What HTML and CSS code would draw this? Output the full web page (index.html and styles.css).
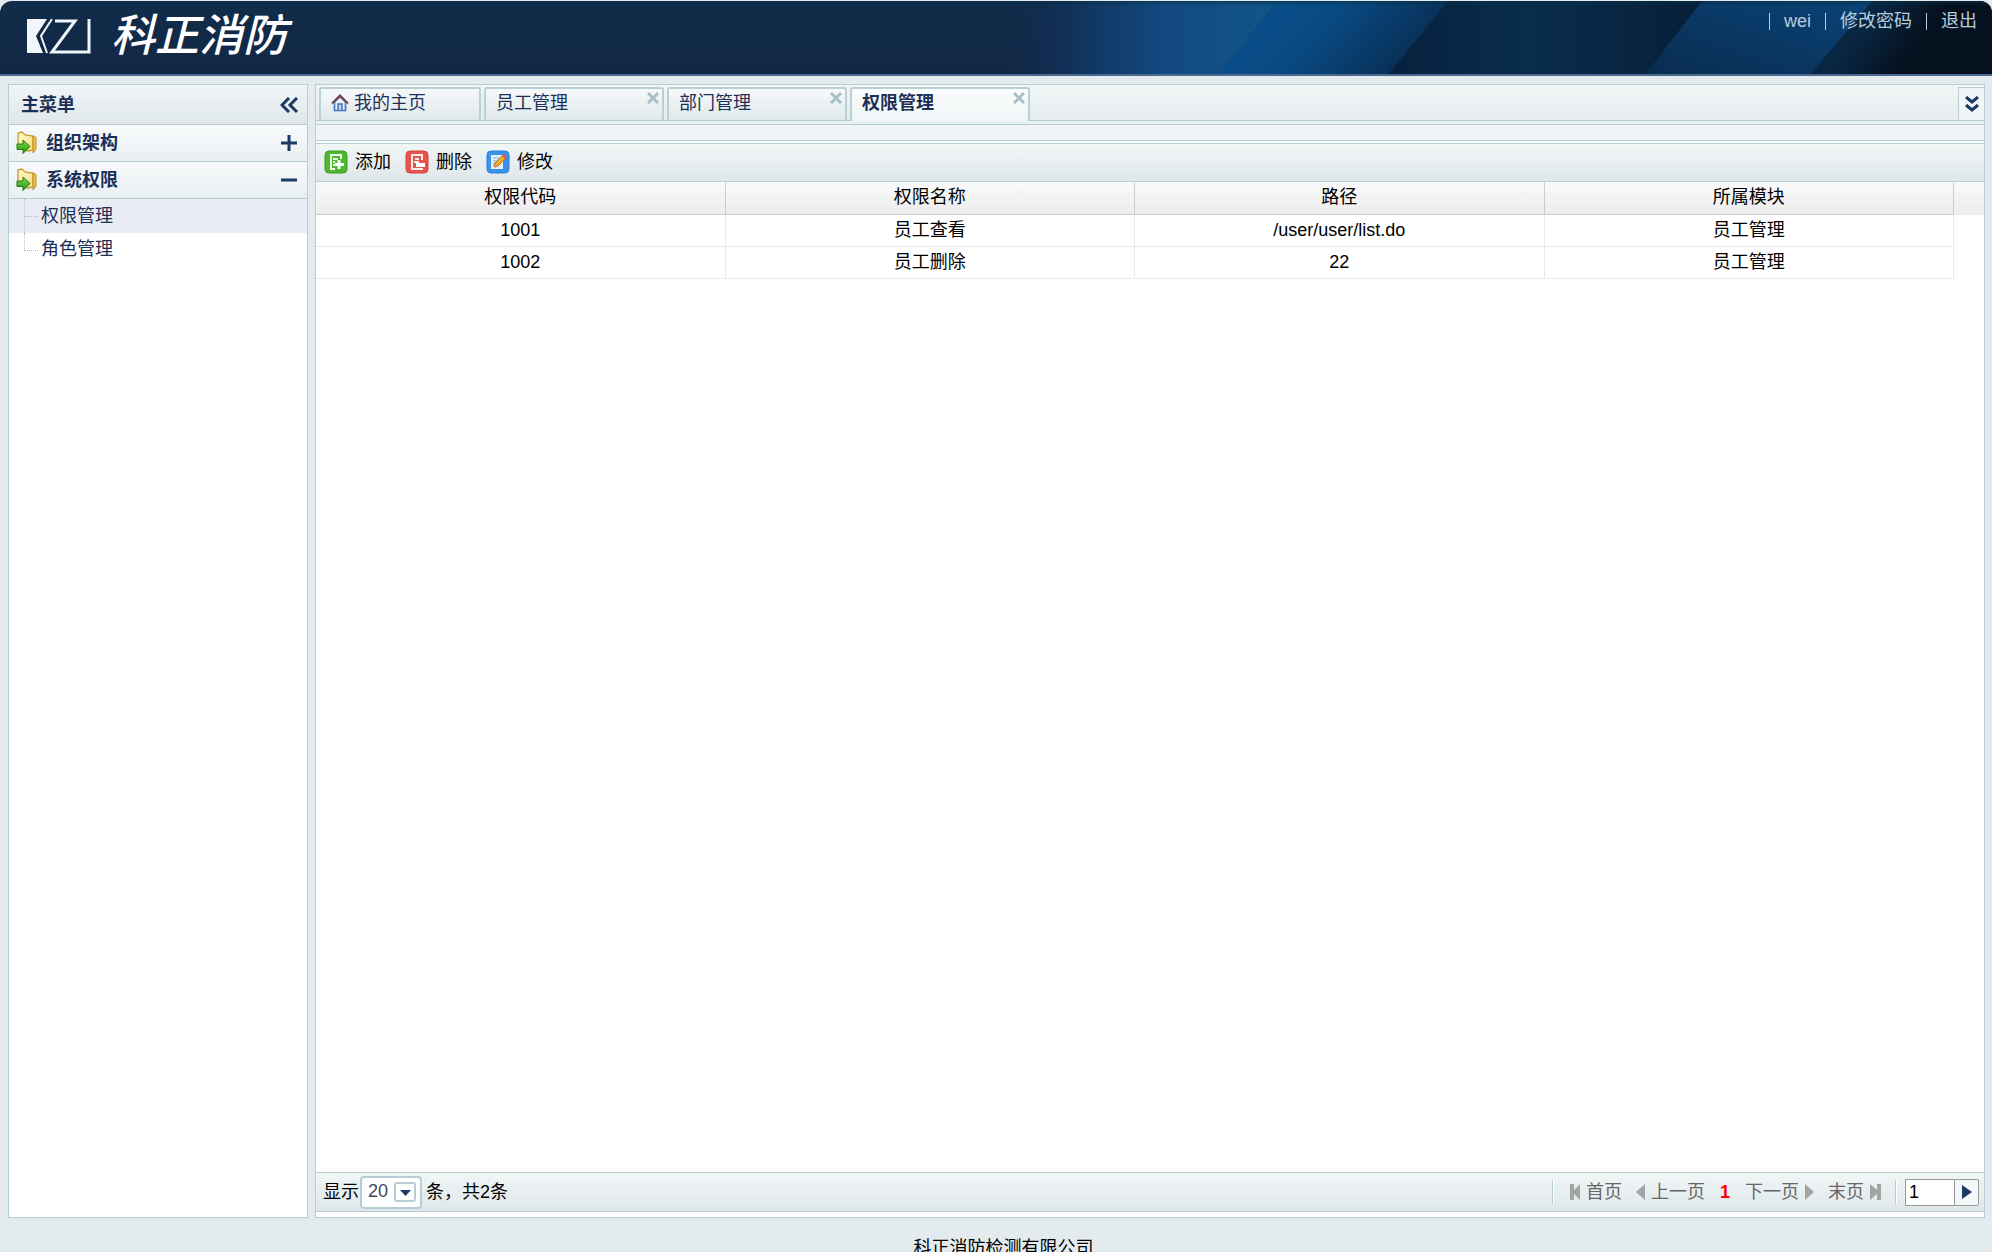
FILE: index.html
```html
<!DOCTYPE html>
<html lang="zh-CN">
<head>
    <meta charset="UTF-8">
    <meta name="viewport" content="width=device-width, initial-scale=1.0">
    <title>科正消防</title>
    <link rel="stylesheet" href="styles.css">
</head>
<body>
    <svg class="defs" width="0" height="0">
        <defs>
            <linearGradient id="fold" x1="0" y1="0" x2="1" y2="1"><stop offset="0" stop-color="#fffbd0"/><stop offset="1" stop-color="#f6dc85"/></linearGradient>
            <linearGradient id="arr" x1="0" y1="0" x2="0" y2="1"><stop offset="0" stop-color="#7edb45"/><stop offset="1" stop-color="#259416"/></linearGradient>
            <linearGradient id="b1" x1="0" y1="0" x2="1" y2="0"><stop offset="0" stop-color="#122847" stop-opacity="0"/><stop offset="0.25" stop-color="#11315a"/><stop offset="0.6" stop-color="#124a80"/><stop offset="1" stop-color="#125489"/></linearGradient>
            <linearGradient id="b2" x1="0" y1="0" x2="1" y2="0.3"><stop offset="0" stop-color="#09508f"/><stop offset="0.5" stop-color="#094a83"/><stop offset="1" stop-color="#082e54"/></linearGradient>
            <linearGradient id="b3" x1="0" y1="0" x2="1" y2="0"><stop offset="0" stop-color="#06213d"/><stop offset="0.45" stop-color="#092c4d"/><stop offset="1" stop-color="#071f38"/></linearGradient>
            <linearGradient id="b4" x1="0" y1="1" x2="1" y2="0"><stop offset="0" stop-color="#0a2c50"/><stop offset="1" stop-color="#094377"/></linearGradient>
            <linearGradient id="b5" x1="0" y1="0" x2="1" y2="0.3"><stop offset="0.1" stop-color="#0a2b4a"/><stop offset="0.4" stop-color="#082440"/><stop offset="0.7" stop-color="#06111f"/></linearGradient>
            <linearGradient id="shade" x1="0" y1="0" x2="0" y2="1"><stop offset="0" stop-color="#063044" stop-opacity="0.6"/><stop offset="1" stop-color="#063044" stop-opacity="0"/></linearGradient>
            <symbol id="folder" viewBox="0 0 22 24">
                <path d="M2 2l4-1 3 3 8 1v14l-5 1L2 17z" fill="url(#fold)" stroke="#c99c2c" stroke-width="1.3"/>
                <path d="M17 5l3 1.500V18l-3 4z" fill="#ecbf4a" stroke="#c0902a"/>
                <path d="M1 13h6V9l7 6.500-7 7v-4H1z" fill="url(#arr)" stroke="#207c14"/>
            </symbol>
        </defs>
    </svg>

    <header class="header">
        <svg class="bands" viewBox="0 0 992 74" aria-hidden="true">
            <path d="M0 0H277L219 74H0z" fill="url(#b1)"/>
            <path d="M277 0H448L388 74H219z" fill="url(#b2)"/>
            <path d="M448 0H702L645 74H388z" fill="url(#b3)"/>
            <path d="M702 0H872L810 74H645z" fill="url(#b4)"/>
            <path d="M872 0H992V74H810z" fill="url(#b5)"/>
            <path d="M0 0H992V5H0z" fill="url(#shade)"/>
        </svg>
        <div class="logo">
            <svg width="64" height="35" viewBox="0 0 64 35" aria-hidden="true">
                <path d="M0 0H20L9 17 16 34H0z" fill="#f2f5fb"/>
                <path d="M25 0L14 17l6 17" fill="none" stroke="#f2f5fb" stroke-width="2"/>
                <path d="M28 2H48L25 33H62V0" fill="none" stroke="#f2f5fb" stroke-width="3"/>
            </svg>
            <span class="brand">科正消防</span>
        </div>
        <nav class="user">
            <span class="bar"></span><a href="#">wei</a>
            <span class="bar"></span><a href="#">修改密码</a>
            <span class="bar"></span><a href="#">退出</a>
        </nav>
    </header>

    <div class="content">
        <aside class="side">
            <div class="side-title">
                <h2>主菜单</h2>
                <button class="icon-btn" aria-label="收起">
                    <svg width="18" height="16" viewBox="0 0 18 16"><path d="M9 1L2 8l7 7M17 1l-7 7 7 7" fill="none" stroke="#1c3a63" stroke-width="3"/></svg>
                </button>
            </div>
            <div class="group">
                <svg width="22" height="24"><use href="#folder"/></svg>
                <h3>组织架构</h3>
                <button class="icon-btn" aria-label="展开">
                    <svg width="16" height="16" viewBox="0 0 16 16"><path d="M0 8h16M8 0v16" stroke="#1c3a63" stroke-width="3"/></svg>
                </button>
            </div>
            <div class="group">
                <svg width="22" height="24"><use href="#folder"/></svg>
                <h3>系统权限</h3>
                <button class="icon-btn" aria-label="收起">
                    <svg width="16" height="16" viewBox="0 0 16 16"><path d="M0 8h16" stroke="#1c3a63" stroke-width="3"/></svg>
                </button>
            </div>
            <ul class="tree">
                <li class="on"><a href="#">权限管理</a></li>
                <li><a href="#">角色管理</a></li>
            </ul>
        </aside>

        <main class="main">
            <div class="tabs">
                <button class="tab home">
                    <svg width="18" height="18" viewBox="0 0 18 18"><path d="M3.500 8v8.500h11V8L9 3z" fill="#eef4fb" stroke="#3f74c0" stroke-width="1.600"/><path d="M7 16v-6h4v6" fill="#bcd6f3" stroke="#3f74c0" stroke-width="1.500"/><path d="M1 9.500l8-8 8 8" fill="none" stroke="#804048" stroke-width="2"/></svg>
                    <span>我的主页</span>
                </button>
                <div class="tab"><span>员工管理</span><button class="close" aria-label="关闭"><svg width="12" height="12" viewBox="0 0 12 12"><path d="M1 1l10 10M11 1L1 11"/></svg></button></div>
                <div class="tab"><span>部门管理</span><button class="close" aria-label="关闭"><svg width="12" height="12" viewBox="0 0 12 12"><path d="M1 1l10 10M11 1L1 11"/></svg></button></div>
                <div class="tab active"><span>权限管理</span><button class="close" aria-label="关闭"><svg width="12" height="12" viewBox="0 0 12 12"><path d="M1 1l10 10M11 1L1 11"/></svg></button></div>
                <button class="more" aria-label="更多">
                    <svg width="14" height="16" viewBox="0 0 14 16"><path d="M1 1l6 5 6-5M1 9l6 5 6-5" fill="none" stroke="#1c3a63" stroke-width="3"/></svg>
                </button>
            </div>
            <div class="strip"></div>
            <div class="band"></div>

            <div class="toolbar">
                <button>
                    <svg width="24" height="24" viewBox="0 0 24 24"><rect x="1" y="1" width="22" height="22" rx="4" fill="#4cb82c" stroke="#3a9d22"/><path d="M6 5h11v4M7 5v14h4M9 9h5M9 12h2M9 15h2" fill="none" stroke="#effbe9" stroke-width="2"/><path d="M15 10v9M11 14.500h9" stroke="#fff" stroke-width="3"/></svg>
                    添加
                </button>
                <button>
                    <svg width="24" height="24" viewBox="0 0 24 24"><rect x="1" y="1" width="22" height="22" rx="4" fill="#e8544b" stroke="#d3423c"/><path d="M17 10V5H7v14h11M10 9h4M9 12h5" fill="none" stroke="#fdeceb" stroke-width="2"/><path d="M11 15h9" stroke="#fff" stroke-width="4"/></svg>
                    删除
                </button>
                <button>
                    <svg width="24" height="24" viewBox="0 0 24 24"><rect x="1" y="1" width="22" height="22" rx="4" fill="#3a92ea" stroke="#2a7fd8"/><path d="M5 5h12v14H5z" fill="#e4eefa"/><path d="M7 8h6M7 11h4M7 14h2" stroke="#7ba6d8"/><path d="M8 17l1-4 8-8 3 3-8 8z" fill="#f2ab2e" stroke="#b8771a"/><path d="M16 6l2-2 3 3-2 2z" fill="#e7564a"/></svg>
                    修改
                </button>
            </div>

            <div class="grid">
                <table>
                    <thead>
                        <tr><th>权限代码</th><th>权限名称</th><th>路径</th><th>所属模块</th></tr>
                    </thead>
                    <tbody>
                        <tr><td>1001</td><td>员工查看</td><td>/user/user/list.do</td><td>员工管理</td></tr>
                        <tr><td>1002</td><td>员工删除</td><td>22</td><td>员工管理</td></tr>
                    </tbody>
                </table>
            </div>

            <div class="pager">
                <label for="size">显示</label>
                <span class="size">
                    <select id="size"><option>20</option><option>50</option></select>
                    <svg width="22" height="20" viewBox="0 0 22 20"><rect x="1" y="1" width="20" height="18" rx="2" fill="#fff" stroke="#b7ced4" stroke-width="2"/><path d="M6 8h11l-5.500 6z" fill="#1c3a63"/></svg>
                </span>
                <span>条，共2条</span>
                <div class="pages">
                    <i class="sep"></i>
                    <button class="first"><svg width="10" height="16" viewBox="0 0 10 16"><path d="M0 0h4v6l6-6v16l-6-6v6H0z" fill="#a3a3a3"/></svg>首页</button>
                    <button class="prev"><svg width="9" height="16" viewBox="0 0 9 16"><path d="M9 0v16L0 8z" fill="#a3a3a3"/></svg>上一页</button>
                    <b>1</b>
                    <button class="next">下一页<svg width="9" height="16" viewBox="0 0 9 16"><path d="M0 0v16l9-8z" fill="#a3a3a3"/></svg></button>
                    <button class="end">末页<svg width="11" height="16" viewBox="0 0 11 16"><path d="M11 0H7v6L0 0v16l7-6v6h4z" fill="#a3a3a3"/></svg></button>
                    <i class="sep"></i>
                    <input class="goto" type="text" value="1" aria-label="页码">
                    <button class="go" aria-label="跳转"><svg width="10" height="14" viewBox="0 0 10 14"><path d="M0 0l10 7-10 7z" fill="#1c3a63"/></svg></button>
                </div>
            </div>
        </main>
    </div>

    <footer class="footer">科正消防检测有限公司</footer>
</body>
</html>
```
FILE: styles.css
```css
* {
  box-sizing: border-box;
}
body {
  margin: 0;
  padding-top: 1px;
  height: 100vh;
  overflow: hidden;
  display: flex;
  flex-direction: column;
  background: #e4ebee;
  color: #000;
  font: 18px/24px "Liberation Sans", "Noto Sans CJK SC", sans-serif;
}
button, input, select {
  font: inherit;
  color: inherit;
}
button {
  padding: 0;
  border: none;
  background: none;
  cursor: pointer;
}
svg {
  display: block;
  flex: none;
}
a {
  color: inherit;
  text-decoration: none;
}
h2, h3 {
  margin: 0;
  font-size: 18px;
}
.defs {
  position: absolute;
}

/* header */
.header {
  position: relative;
  flex: none;
  display: flex;
  justify-content: space-between;
  height: 75px;
  overflow: hidden;
  border-bottom: 2px solid #4a6a90;
  border-radius: 12px 12px 0 0;
  background: linear-gradient(#102d4a, #122746);
}
.bands {
  position: absolute;
  top: 0;
  right: 0;
  width: 992px;
  height: 74px;
}
.logo {
  display: flex;
  align-items: center;
  gap: 20px;
  padding: 0 0 3px 27px;
}
.brand {
  color: #fff;
  font-size: 44px;
  font-style: italic;
  font-weight: 500;
  line-height: 60px;
}
.user {
  position: relative;
  display: flex;
  gap: 14px;
  padding: 8px 15px 0 0;
  color: #b7cddd;
}
.bar {
  width: 1px;
  height: 17px;
  margin-top: 4px;
  background: #b7cddd;
}

.content {
  flex: 1;
  min-height: 0;
  display: flex;
  gap: 7px;
  padding: 8px 7px 0 8px;
}

/* sidebar */
.side {
  flex: none;
  width: 300px;
  border: 1px solid #b5cdd3;
  background: #fff;
  color: #1c2f57;
}
.side-title, .group {
  display: flex;
  align-items: center;
  border-bottom: 1px solid #b5cdd3;
}
.side-title {
  height: 40px;
  padding: 0 9px 0 12px;
  background: linear-gradient(#f1f5f6, #dfe7ea);
}
.group {
  height: 37px;
  padding: 0 10px 0 7px;
  gap: 8px;
  background: linear-gradient(#f8fafb, #e9eff1);
}
.icon-btn {
  margin-left: auto;
}
.tree {
  margin: 0;
  padding: 0;
  list-style: none;
}
.tree li {
  position: relative;
  height: 33px;
  padding-left: 32px;
  line-height: 33px;
}
.tree .on {
  height: 34px;
  background: #e9ecf4;
  line-height: 35px;
}
.tree li::before {
  content: "";
  position: absolute;
  left: 15px;
  top: 0;
  width: 13px;
  height: 17px;
  border-left: 1px dotted #bbb;
  border-bottom: 1px dotted #bbb;
}
.tree .on::after {
  content: "";
  position: absolute;
  left: 15px;
  top: 17px;
  height: 17px;
  border-left: 1px dotted #bbb;
}

/* tabs */
.main {
  flex: 1;
  min-width: 0;
  display: flex;
  flex-direction: column;
  padding-bottom: 5px;
  border: 1px solid #b5cdd3;
  background: #fff;
}
.tabs {
  flex: none;
  display: flex;
  align-items: flex-start;
  gap: 3px;
  height: 36px;
  padding: 2px 0 0 3px;
  border-bottom: 1px solid #b5cdd3;
  background: linear-gradient(#f1f5f6, #e5ecee);
}
.tab {
  display: flex;
  align-items: center;
  width: 180px;
  height: 33px;
  padding: 0 3px 4px 10px;
  border: 2px solid #b9d0d5;
  border-bottom: none;
  border-radius: 3px 3px 0 0;
  background: linear-gradient(#f6f9fa, #dfe8ea);
  color: #1c2f57;
}
.home {
  width: 162px;
  gap: 5px;
}
.active {
  height: 38px;
  padding-bottom: 9px;
  background: linear-gradient(#fbfdfd, #edf3f5);
  font-weight: bold;
}
.close {
  align-self: flex-start;
  margin: 3px 0 0 auto;
}
.close path {
  fill: none;
  stroke: #a5c1c7;
  stroke-width: 3;
}
.more {
  display: flex;
  align-items: center;
  justify-content: center;
  width: 26px;
  height: 33px;
  margin-left: auto;
  border: 1px solid #b5cdd3;
  border-width: 1px 0 0 1px;
  background: #f1f5f8;
}
.strip {
  flex: none;
  height: 4px;
  border-bottom: 1px solid #b5cdd3;
  background: #e7f0f2;
}
.band {
  flex: none;
  height: 16px;
  border-bottom: 1px solid #b5cdd3;
  background: #f0f4f7;
}

.toolbar {
  flex: none;
  display: flex;
  align-items: center;
  gap: 14px;
  height: 39px;
  margin-top: 2px;
  padding: 0 0 1px 8px;
  border: 1px solid #b5cdd3;
  border-width: 1px 0;
  background: linear-gradient(#f1f6f6, #dfe7ea);
}
.toolbar button {
  display: flex;
  align-items: center;
  gap: 7px;
}

/* table */
.grid {
  flex: 1;
  min-height: 0;
  padding-right: 30px;
  background: linear-gradient(#fafafa, #ececec) top / 100% 33px no-repeat;
}
table {
  width: 100%;
  table-layout: fixed;
  border-collapse: separate;
  border-spacing: 0;
}
th, td {
  padding: 0 0 2px;
  text-align: center;
  font-weight: normal;
}
th {
  height: 33px;
  border-right: 1px solid #ccc;
  border-bottom: 1px solid #ccc;
}
td {
  height: 32px;
  border-right: 1px solid #e8e8e8;
  border-bottom: 1px solid #e8e8e8;
}

/* pager */
.pager {
  flex: none;
  display: flex;
  align-items: center;
  height: 40px;
  padding: 0 5px 0 7px;
  border: 1px solid #b5cdd3;
  border-width: 1px 0;
  background: linear-gradient(#f1f6f6, #dfe7ea);
}
.size {
  position: relative;
  margin: 0 4px 0 1px;
}
.size select {
  display: block;
  appearance: none;
  width: 62px;
  height: 33px;
  padding: 0 0 2px 6px;
  border: 2px solid #b5cdd3;
  border-radius: 4px;
  background: #fff;
  color: #3d4663;
}
.size svg {
  position: absolute;
  right: 6px;
  top: 6px;
  pointer-events: none;
}
.pages {
  display: flex;
  align-items: center;
  margin-left: auto;
  color: #666;
}
.pages button {
  display: flex;
  align-items: center;
}
.sep {
  width: 2px;
  height: 24px;
  border-left: 1px solid #b5cdd3;
  background: #fff;
}
.first, .prev, .next, .end {
  gap: 6px;
}
.first {
  margin: 0 14px 0 16px;
}
.pages b {
  margin: 0 15px;
  color: #f00;
}
.end {
  margin: 0 14px;
}
.goto {
  width: 49px;
  height: 27px;
  margin-left: 8px;
  padding: 0 3px;
  border: 1px solid #999;
  border-right: none;
  border-radius: 0;
  background: #fff;
  color: #000;
}
.pages .go {
  justify-content: center;
  width: 25px;
  height: 27px;
  border: 1px solid #999;
  border-radius: 0 2px 2px 0;
  background: #f4f6f7;
}

.footer {
  flex: none;
  height: 34px;
  padding: 18px 0 0 15px;
  text-align: center;
  white-space: nowrap;
}
```
